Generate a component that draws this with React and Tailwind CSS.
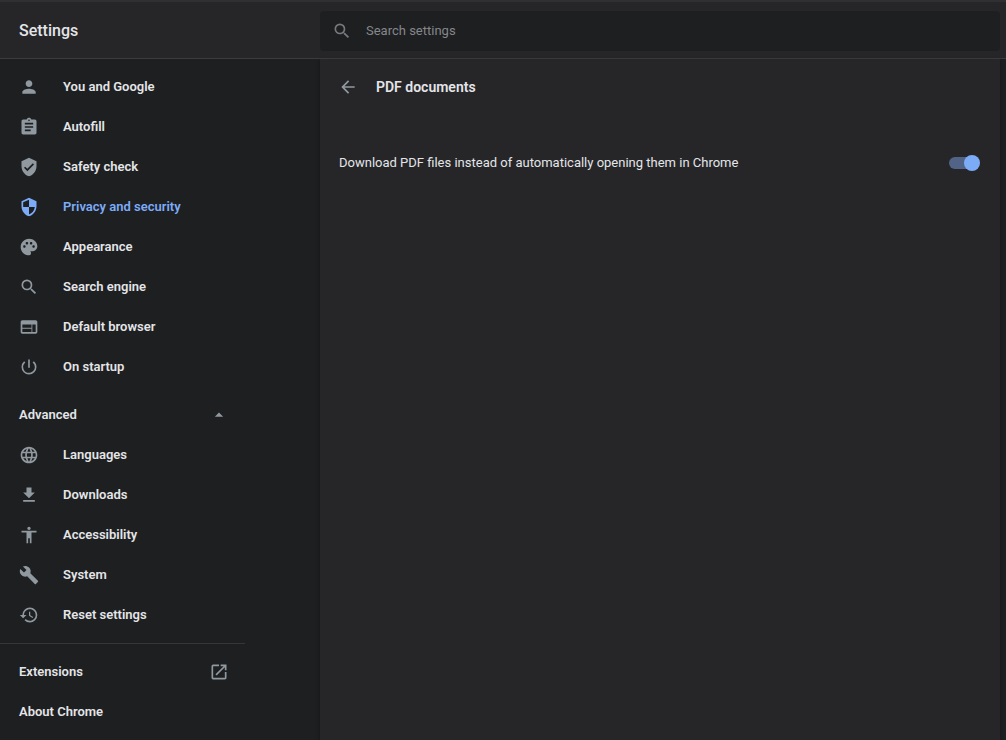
import React, { useState } from 'react'
import {
  MdPerson,
  MdAssignment,
  MdVerifiedUser,
  MdSecurity,
  MdPalette,
  MdSearch,
  MdWeb,
  MdPowerSettingsNew,
  MdLanguage,
  MdFileDownload,
  MdAccessibility,
  MdBuild,
  MdRestore,
  MdOpenInNew,
  MdArrowBack,
  MdArrowDropUp,
} from 'react-icons/md'

const mainItems = [
  { label: 'You and Google', icon: MdPerson },
  { label: 'Autofill', icon: MdAssignment },
  { label: 'Safety check', icon: MdVerifiedUser },
  { label: 'Privacy and security', icon: MdSecurity, active: true },
  { label: 'Appearance', icon: MdPalette },
  { label: 'Search engine', icon: MdSearch },
  { label: 'Default browser', icon: MdWeb },
  { label: 'On startup', icon: MdPowerSettingsNew },
]

const advancedItems = [
  { label: 'Languages', icon: MdLanguage },
  { label: 'Downloads', icon: MdFileDownload },
  { label: 'Accessibility', icon: MdAccessibility },
  { label: 'System', icon: MdBuild },
  { label: 'Reset settings', icon: MdRestore },
]

function NavItem({ label, icon: Icon, active }) {
  return (
    <a
      href="#"
      aria-current={active ? 'page' : undefined}
      className={`flex h-10 items-center gap-6 ${active ? 'text-[#7cacf8]' : 'text-[#e4e5e8]'}`}
    >
      <Icon size={20} className={active ? 'text-[#7cacf8]' : 'text-[#9099a0]'} />
      {label}
    </a>
  )
}

function Sidebar() {
  const [open, setOpen] = useState(true)

  return (
    <nav className="w-80 shrink-0 pb-2 text-[13px] font-semibold leading-5 text-[#e4e5e8]">
      <div className="w-[245px] pl-[19px] pr-4 py-2">
        {mainItems.map(item => <NavItem key={item.label} {...item} />)}
        <button
          onClick={() => setOpen(!open)}
          aria-expanded={open}
          className="mt-2 flex h-10 w-full items-center justify-between"
        >
          Advanced
          <MdArrowDropUp size={20} className={`text-[#9099a0] ${open ? '' : 'rotate-180'}`} />
        </button>
        {open && advancedItems.map(item => <NavItem key={item.label} {...item} />)}
      </div>
      <div className="w-[245px] border-t border-[#35363a] pl-[19px] pr-4 pt-2">
        <a href="#" className="flex h-10 items-center justify-between">
          Extensions
          <MdOpenInNew size={20} className="text-[#9099a0]" />
        </a>
        <a href="#" className="flex h-10 items-center">About Chrome</a>
      </div>
    </nav>
  )
}

function Toggle({ id, checked, onChange }) {
  return (
    <span className="relative flex h-4 w-[31px] shrink-0 items-center">
      <input
        id={id}
        type="checkbox"
        role="switch"
        checked={checked}
        onChange={onChange}
        className="peer h-3 w-7 cursor-pointer appearance-none rounded-full bg-[#5f6368] checked:bg-[#516488]"
      />
      <span className="pointer-events-none absolute left-0 size-4 rounded-full bg-[#bdc1c6] peer-checked:left-auto peer-checked:right-0 peer-checked:bg-[#7cacf8]" />
    </span>
  )
}

export default function App() {
  const [download, setDownload] = useState(true)

  return (
    <div className="flex min-h-screen flex-col bg-[#1e1f21] font-[Roboto,sans-serif] text-[#e4e5e8]">
      {/* Toolbar */}
      <header className="flex h-[59px] items-center border-t-2 border-b border-t-[#303033] border-b-[#3c3c3f] bg-[#262628] pr-1.5 pt-0.5">
        <h1 className="w-80 shrink-0 pl-[19px] text-base font-medium leading-6">Settings</h1>
        <label className="flex h-10 flex-1 items-center gap-[14px] rounded bg-[#1e1f21] pl-3">
          <MdSearch size={20} className="text-[#77797d]" />
          <input
            type="search"
            aria-label="Search settings"
            placeholder="Search settings"
            className="min-w-0 flex-1 bg-transparent text-[13px] leading-5 outline-none placeholder:text-[#85878b]"
          />
        </label>
      </header>

      <div className="flex flex-1">
        <Sidebar />
        <main className="mr-1.5 flex-1 bg-[#262628] pl-[19px] pr-5 shadow-[0_2px_4px_rgba(0,0,0,0.4)]">
          <div className="-ml-px flex h-14 items-center gap-[18px]">
            <button aria-label="Back" className="text-[#9099a0]">
              <MdArrowBack size={20} />
            </button>
            <h2 className="text-sm font-semibold leading-5">PDF documents</h2>
          </div>
          <div className="mt-6 flex h-12 items-center justify-between gap-6">
            <label htmlFor="pdf-download" className="text-[13px] leading-5">
              Download PDF files instead of automatically opening them in Chrome
            </label>
            <Toggle
              id="pdf-download"
              checked={download}
              onChange={e => setDownload(e.target.checked)}
            />
          </div>
        </main>
      </div>
    </div>
  )
}
